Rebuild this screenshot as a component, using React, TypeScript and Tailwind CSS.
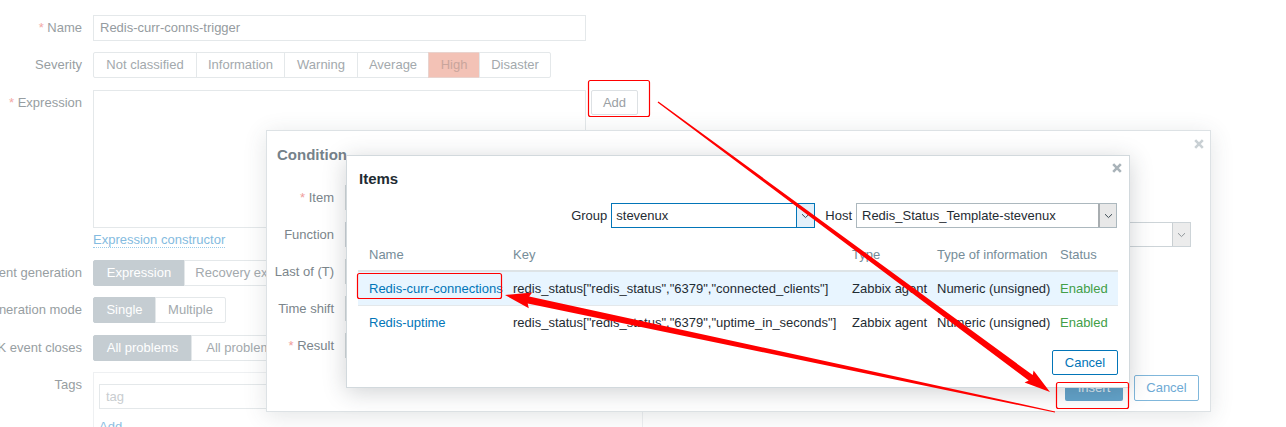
import React from 'react'

type Seg = { label: string; w: string }

function Req({ color }: { color: string }) {
  return <span className={color}>*</span>
}

function FormRow({
  label,
  required,
  className,
  children,
}: {
  label: string
  required?: boolean
  className?: string
  children?: React.ReactNode
}) {
  return (
    <div className={`flex ${className ?? ''}`}>
      <div className="w-[82px] shrink-0 flex justify-end whitespace-nowrap h-[26px] leading-[26px] text-[#979ea2]">
        <span>
          {required && <Req color="text-[#f3a9a6]" />}
          {required && ' '}
          {label}
        </span>
      </div>
      <div className="ml-[11px]">{children}</div>
    </div>
  )
}

function Segmented({ items, active, activeClass }: { items: Seg[]; active: number; activeClass: string }) {
  return (
    <div className="flex h-[26px]">
      {items.map((s, i) => (
        <div
          key={s.label}
          className={`${s.w} shrink-0 flex items-center justify-center whitespace-nowrap border ${
            i > 0 ? '-ml-px' : 'rounded-l-[2px]'
          } ${i === items.length - 1 ? 'rounded-r-[2px]' : ''} ${
            i === active ? activeClass : 'border-[#e4e8ea] text-[#a3a9ad] bg-white'
          }`}
        >
          {s.label}
        </div>
      ))}
    </div>
  )
}

function CloseX({ color }: { color: string }) {
  return (
    <svg width="10" height="10" viewBox="0 0 10 10" className={color}>
      <path d="M1.2 1.2L8.8 8.8M8.8 1.2L1.2 8.8" stroke="currentColor" strokeWidth="2.6" />
    </svg>
  )
}

function Chevron({ color }: { color: string }) {
  return (
    <svg width="9" height="6" viewBox="0 0 9 6" className={color}>
      <path d="M1 1.2L4.5 4.6L8 1.2" stroke="currentColor" strokeWidth="1" fill="none" />
    </svg>
  )
}

function BackgroundForm() {
  return (
    <div className="flex flex-col pt-[15px]">
      <FormRow label="Name" required>
        <div className="w-[493px] h-[26px] border border-[#e4e8ea] pl-[6px] leading-[24px] text-[#959ba0]">
          Redis-curr-conns-trigger
        </div>
      </FormRow>

      <FormRow label="Severity" className="mt-[11px]">
        <Segmented
          items={[
            { label: 'Not classified', w: 'w-[104px]' },
            { label: 'Information', w: 'w-[89px]' },
            { label: 'Warning', w: 'w-[74px]' },
            { label: 'Average', w: 'w-[72px]' },
            { label: 'High', w: 'w-[52px]' },
            { label: 'Disaster', w: 'w-[72px]' },
          ]}
          active={4}
          activeClass="bg-[#f3c2b6] border-[#e9d3ce] text-[#c9a59c]"
        />
      </FormRow>

      <FormRow label="Expression" required className="mt-[12px]">
        <div className="flex items-start">
          <div className="w-[493px] h-[138px] border border-[#e4e8ea]" />
          <div className="ml-[5px] w-[47px] h-[25px] border border-[#dde1e4] bg-white rounded-[2px] flex items-center justify-center text-[#9aa0a4]">
            Add
          </div>
        </div>
        <div className="mt-[4px] h-[16px] leading-[15px]">
          <span className="inline-block border-b border-dotted border-[#9ccbe8] text-[#84bbe0]">
            Expression constructor
          </span>
        </div>
      </FormRow>

      <FormRow label="OK event generation" className="mt-[12px]">
        <Segmented
          items={[
            { label: 'Expression', w: 'w-[92px]' },
            { label: 'Recovery expression', w: 'w-[144px]' },
            { label: 'None', w: 'w-[60px]' },
          ]}
          active={0}
          activeClass="bg-[#c5cdd2] border-[#c5cdd2] text-white"
        />
      </FormRow>

      <FormRow label="PROBLEM event generation mode" className="mt-[11px]">
        <Segmented
          items={[
            { label: 'Single', w: 'w-[63px]' },
            { label: 'Multiple', w: 'w-[71px]' },
          ]}
          active={0}
          activeClass="bg-[#c5cdd2] border-[#c5cdd2] text-white"
        />
      </FormRow>

      <FormRow label="OK event closes" className="mt-[12px]">
        <Segmented
          items={[
            { label: 'All problems', w: 'w-[99px]' },
            { label: 'All problems if tag values match', w: 'w-[214px]' },
          ]}
          active={0}
          activeClass="bg-[#c5cdd2] border-[#c5cdd2] text-white"
        />
      </FormRow>

      <FormRow label="Tags" className="mt-[11px]">
        <div className="w-[550px] h-[90px] border border-[#eef0f2] pt-[11px] pl-[5px]">
          <div className="w-[240px] h-[25px] border border-[#e4e8ea] pl-[6px] leading-[23px] text-[#c9cdd0]">tag</div>
          <div className="mt-[10px] leading-[16px] text-[#8cc0e2]">Add</div>
        </div>
      </FormRow>
    </div>
  )
}

function CondRow({ label, required, children }: { label: string; required?: boolean; children?: React.ReactNode }) {
  return (
    <div className="flex h-[25px] items-center">
      <div className="w-[67px] shrink-0 flex justify-end whitespace-nowrap text-[#7b858b]">
        <span>
          {required && <Req color="text-[#ef9d9b]" />}
          {required && ' '}
          {label}
        </span>
      </div>
      <div className="ml-[11px] h-full flex">{children}</div>
    </div>
  )
}

function ConditionModal() {
  return (
    <div className="absolute left-[266px] top-[130px] w-[945px] h-[282px] bg-white border border-[#dde2e5] shadow-[0_4px_22px_rgba(60,70,80,0.14)]">
      <div className="absolute top-[8px] right-[6px]">
        <CloseX color="text-[#c9d0d4]" />
      </div>
      <div className="pl-[10px] pt-[14px] h-[34px] leading-[20px] text-[15px] font-bold text-[#75828a]">Condition</div>
      <div className="mt-[20px] flex flex-col gap-[12px]">
        <CondRow label="Item" required>
          <div className="w-[420px] h-full border border-[#d3d9dc]" />
        </CondRow>
        <CondRow label="Function">
          <div className="w-[846px] h-full border border-[#cdd4d8] flex justify-end">
            <div className="w-[18px] h-full bg-[#ececec] border-l border-[#c9cfd2] flex items-center justify-center">
              <Chevron color="text-[#8f9599]" />
            </div>
          </div>
        </CondRow>
        <CondRow label="Last of (T)">
          <div className="w-[110px] h-full border border-[#d3d9dc]" />
        </CondRow>
        <CondRow label="Time shift">
          <div className="w-[110px] h-full border border-[#d3d9dc]" />
        </CondRow>
        <CondRow label="Result" required>
          <div className="w-[320px] h-full border border-[#d3d9dc]" />
        </CondRow>
      </div>
      <div className="mt-[17px] flex justify-end gap-[11px] pr-[11px]">
        <div className="w-[58px] h-[26px] rounded-[2px] bg-[#63a4cb] text-[#e3eff7] flex items-center justify-center">Insert</div>
        <div className="w-[65px] h-[26px] rounded-[2px] border border-[#80b7db] bg-white text-[#6eaad5] flex items-center justify-center">
          Cancel
        </div>
      </div>
    </div>
  )
}

const cols = ['w-[144px]', 'w-[339px]', 'w-[85px]', 'w-[123px]', 'w-[69px]']

const rows = [
  {
    name: 'Redis-curr-connections',
    key: 'redis_status["redis_status","6379","connected_clients"]',
    hover: true,
  },
  {
    name: 'Redis-uptime',
    key: 'redis_status["redis_status","6379","uptime_in_seconds"]',
    hover: false,
  },
]

function ItemsModal() {
  return (
    <div className="absolute left-[346px] top-[155px] w-[784px] h-[233px] bg-white border border-[#d2d9dd] shadow-[0_4px_22px_rgba(40,50,60,0.22)] text-[#1f2c33]">
      <div className="absolute top-[7px] right-[7px]">
        <CloseX color="text-[#a9b3b9]" />
      </div>
      <div className="pl-[12px] pt-[13px] leading-[20px] text-[15px] font-bold">Items</div>
      <div className="px-[11px]">
        <div className="mt-[14px] flex justify-end items-center h-[25px] mr-[1px]">
          <span>Group</span>
          <div className="ml-[4px] w-[204px] h-[25px] border border-[#0275b8] flex">
            <span className="flex-1 pl-[4px] leading-[23px]">stevenux</span>
            <div className="w-[18px] h-full bg-[#e3f0fa] border-l border-[#0275b8] flex items-center justify-center">
              <Chevron color="text-[#3b4a52]" />
            </div>
          </div>
          <span className="ml-[10px]">Host</span>
          <div className="ml-[4px] w-[261px] h-[25px] border border-[#acb8be] flex">
            <span className="flex-1 pl-[5px] leading-[23px] whitespace-nowrap">Redis_Status_Template-stevenux</span>
            <div className="w-[18px] h-full bg-[#e8e8e8] border-l-2 border-[#a8adb0] flex items-center justify-center">
              <Chevron color="text-[#3b4a52]" />
            </div>
          </div>
        </div>

        <div className="mt-[12px]">
          <div className="flex h-[32px] items-center border-b-2 border-[#dde3e6] text-[#768d99]">
            {['Name', 'Key', 'Type', 'Type of information', 'Status'].map((h, i) => (
              <div key={h} className={`${cols[i]} shrink-0 pl-[11px] whitespace-nowrap`}>
                {h}
              </div>
            ))}
          </div>
          {rows.map((r) => (
            <div
              key={r.name}
              className={`flex h-[34px] items-center ${r.hover ? 'bg-[#e8f5ff] border-b border-[#e3e8eb]' : ''}`}
            >
              <div className={`${cols[0]} shrink-0 pl-[11px] whitespace-nowrap text-[#0275b8]`}>{r.name}</div>
              <div className={`${cols[1]} shrink-0 pl-[11px] whitespace-nowrap`}>{r.key}</div>
              <div className={`${cols[2]} shrink-0 pl-[11px] whitespace-nowrap`}>Zabbix agent</div>
              <div className={`${cols[3]} shrink-0 pl-[11px] whitespace-nowrap`}>Numeric (unsigned)</div>
              <div className={`${cols[4]} shrink-0 pl-[11px] whitespace-nowrap text-[#429e47]`}>Enabled</div>
            </div>
          ))}
        </div>

        <div className="mt-[10px] flex justify-end">
          <div className="w-[66px] h-[25px] rounded-[2px] border border-[#0275b8] text-[#0275b8] bg-white flex items-center justify-center">
            Cancel
          </div>
        </div>
      </div>
    </div>
  )
}

function arrow(tx: number, ty: number, hx: number, hy: number, w0: number, w1: number, headLen: number, headW: number) {
  const dx = hx - tx
  const dy = hy - ty
  const len = Math.hypot(dx, dy)
  const ux = dx / len
  const uy = dy / len
  const nx = -uy
  const ny = ux
  const bx = hx - ux * headLen
  const by = hy - uy * headLen
  const pts = [
    [tx + nx * w0, ty + ny * w0],
    [bx + nx * w1, by + ny * w1],
    [bx + nx * headW - ux * 2, by + ny * headW - uy * 2],
    [hx, hy],
    [bx - nx * headW - ux * 2, by - ny * headW - uy * 2],
    [bx - nx * w1, by - ny * w1],
    [tx - nx * w0, ty - ny * w0],
  ]
  return pts.map((p) => `${p[0].toFixed(1)},${p[1].toFixed(1)}`).join(' ')
}

function Annotations() {
  return (
    <svg className="absolute left-0 top-0 pointer-events-none" width="1286" height="427" viewBox="0 0 1286 427">
      <rect x="588.5" y="80.5" width="61" height="36" rx="2" fill="none" stroke="#ff0000" strokeWidth="1.2" />
      <rect x="357.5" y="273.5" width="144" height="25" rx="2" fill="none" stroke="#ff0000" strokeWidth="1.2" />
      <rect x="1056.5" y="382.5" width="72" height="26" rx="2" fill="none" stroke="#ff0000" strokeWidth="1.2" />
      <polygon points={arrow(658, 102, 1050, 392, 0.7, 3.3, 24, 7.5)} fill="#ff0000" />
      <polygon points={arrow(1055, 412, 505, 295, 0.6, 3.6, 24, 8)} fill="#ff0000" />
    </svg>
  )
}

export default function App() {
  return (
    <div className="relative w-[1286px] h-[427px] overflow-hidden bg-white text-[13px] font-['Liberation_Sans',Arial,sans-serif]">
      <BackgroundForm />
      <ConditionModal />
      <ItemsModal />
      <Annotations />
    </div>
  )
}
